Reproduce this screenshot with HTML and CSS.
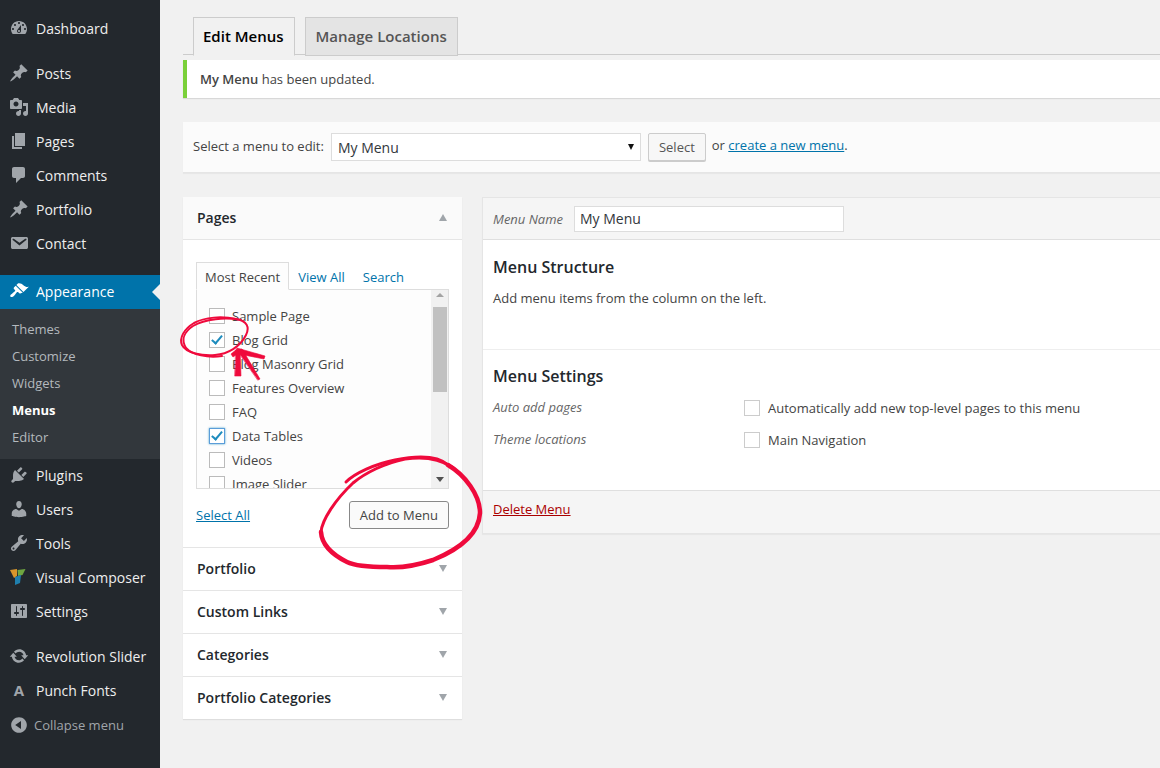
FILE: index.html
```html
<!DOCTYPE html>
<html lang="en">
    <head>
        <title>Edit Menus</title>
        <meta charset="UTF-8">
        <link rel="stylesheet" href="styles.css">
    </head>
    <body>
        <aside class="sidebar">
            <a class="item"><svg class="icon" viewBox="0 0 20 20"><path d="M3.76 16h12.48c1.1-1.37 1.76-3.11 1.76-5 0-4.42-3.58-8-8-8s-8 3.58-8 8c0 1.89.66 3.63 1.76 5zM10 4c.55 0 1 .45 1 1s-.45 1-1 1-1-.45-1-1 .45-1 1-1zM6 6c.55 0 1 .45 1 1s-.45 1-1 1-1-.45-1-1 .45-1 1-1zm8 0c.55 0 1 .45 1 1s-.45 1-1 1-1-.45-1-1 .45-1 1-1zm-5.37 5.55L12 7v6c0 1.1-.9 2-2 2s-2-.9-2-2c0-.57.24-1.08.63-1.45zM4 10c.55 0 1 .45 1 1s-.45 1-1 1-1-.45-1-1 .45-1 1-1zm12 0c.55 0 1 .45 1 1s-.45 1-1 1-1-.45-1-1 .45-1 1-1zm-5 3c0-.55-.45-1-1-1s-1 .45-1 1 .45 1 1 1 1-.45 1-1z"/></svg>Dashboard</a>

            <div class="group">
                <a class="item"><svg class="icon" viewBox="0 0 20 20"><path d="M10.44 3.02l1.82-1.82 6.36 6.35-1.83 1.82c-1.05-.68-2.48-.57-3.41.36l-.75.75c-.92.93-1.04 2.35-.35 3.41l-1.83 1.82-2.41-2.41-2.8 2.79c-.42.42-3.38 2.71-3.8 2.29s1.86-3.39 2.28-3.81l2.79-2.79L4.1 9.36l1.83-1.82c1.05.69 2.48.57 3.4-.36l.75-.75c.93-.92 1.05-2.35.36-3.41z"/></svg>Posts</a>
                <a class="item"><svg class="icon" viewBox="0 0 20 20"><path d="M13 11V4c0-.55-.45-1-1-1h-1.67L9 1H5L3.67 3H2c-.55 0-1 .45-1 1v7c0 .55.45 1 1 1h10c.55 0 1-.45 1-1zM7 4.5c1.38 0 2.5 1.12 2.5 2.5S8.38 9.5 7 9.5 4.5 8.38 4.5 7 5.62 4.5 7 4.5zM14 6h5v10.5c0 1.38-1.12 2.5-2.5 2.5S14 17.88 14 16.5s1.12-2.5 2.5-2.5c.17 0 .34.02.5.05V9h-3V6zm-4 8.05V13h2v3.5c0 1.38-1.12 2.5-2.5 2.5S7 17.88 7 16.5 8.12 14 9.5 14c.17 0 .34.02.5.05z"/></svg>Media</a>
                <a class="item"><svg class="icon" viewBox="0 0 20 20"><path d="M6 15V2h10v13H6zm-1 1h8v2H3V5h2v11z"/></svg>Pages</a>
                <a class="item"><svg class="icon" viewBox="0 0 20 20"><path d="M5 2h9c1.1 0 2 .9 2 2v7c0 1.1-.9 2-2 2h-2l-5 5v-5H5c-1.1 0-2-.9-2-2V4c0-1.1.9-2 2-2z"/></svg>Comments</a>
                <a class="item"><svg class="icon" viewBox="0 0 20 20"><path d="M10.44 3.02l1.82-1.82 6.36 6.35-1.83 1.82c-1.05-.68-2.48-.57-3.41.36l-.75.75c-.92.93-1.04 2.35-.35 3.41l-1.83 1.82-2.41-2.41-2.8 2.79c-.42.42-3.38 2.71-3.8 2.29s1.86-3.39 2.28-3.81l2.79-2.79L4.1 9.36l1.83-1.82c1.05.69 2.48.57 3.4-.36l.75-.75c.93-.92 1.05-2.35.36-3.41z"/></svg>Portfolio</a>
                <a class="item"><svg class="icon" viewBox="0 0 20 20"><path d="M3.87 4h13.25C18.37 4 19 4.59 19 5.79v8.42c0 1.19-.63 1.79-1.88 1.79H3.87c-1.25 0-1.88-.6-1.88-1.79V5.79c0-1.2.63-1.79 1.88-1.79zm6.62 8.6l6.74-5.53c.24-.2.43-.66.13-1.07-.29-.41-.82-.42-1.17-.17l-5.7 3.86L4.8 5.83c-.35-.25-.88-.24-1.17.17-.3.41-.11.87.13 1.07z"/></svg>Contact</a>
            </div>

            <div class="group group-wide">
                <a class="item current"><svg class="icon" viewBox="0 0 20 20"><path d="M14.48 11.06L7.41 3.99l1.5-1.5c.5-.56 2.3-.47 3.51.32 1.21.8 1.43 1.28 2.91 2.1 1.18.64 2.45 1.26 4.45.85zm-.71.71L6.7 4.7 4.93 6.47c-.39.39-.39 1.02 0 1.41l1.06 1.06c.39.39.39 1.03 0 1.42-.6.6-1.43 1.11-2.21 1.69-.35.26-.7.53-1.01.84C1.43 13.23.76 14.89 1.55 15.69s2.45.13 3.79-1.21c.31-.31.58-.66.84-1.01.58-.78 1.09-1.61 1.69-2.21.39-.39 1.02-.39 1.41 0l1.06 1.06c.39.39 1.02.39 1.41 0z"/></svg>Appearance</a>
                <ul class="submenu">
                    <li>Themes</li>
                    <li>Customize</li>
                    <li>Widgets</li>
                    <li class="active">Menus</li>
                    <li>Editor</li>
                </ul>
                <a class="item"><svg class="icon" viewBox="0 0 20 20"><path d="M13.11 4.36L9.87 7.6 8 5.73l3.24-3.24c.35-.34 1.05-.2 1.56.32.52.51.66 1.21.31 1.55zm-8 1.77l.91-1.12 9.01 9.01-1.19.84c-.71.71-2.63 1.16-3.82 1.16H6.14L4.9 17.26c-.59.59-1.54.59-2.12 0-.59-.58-.59-1.53 0-2.12l1.24-1.24v-3.88c0-1.13.4-3.19 1.09-3.89zm7.26 3.97l3.24-3.24c.34-.35 1.04-.21 1.55.31.52.51.66 1.21.31 1.55l-3.24 3.25z"/></svg>Plugins</a>
                <a class="item"><svg class="icon" viewBox="0 0 20 20"><path d="M10 9.25c-2.27 0-2.73-3.44-2.73-3.44C7 4.02 7.82 2 9.97 2c2.16 0 2.98 2.02 2.71 3.81 0 0-.41 3.44-2.68 3.44zm0 2.57L12.72 10c2.39 0 4.52 2.33 4.52 4.53v2.49s-3.65 1.13-7.24 1.13c-3.65 0-7.24-1.13-7.24-1.13v-2.49c0-2.25 1.94-4.48 4.47-4.48z"/></svg>Users</a>
                <a class="item"><svg class="icon" viewBox="0 0 20 20"><path d="M16.68 9.77c-1.34 1.34-3.3 1.67-4.95.99l-5.41 6.52c-.99.99-2.59.99-3.58 0s-.99-2.59 0-3.57l6.52-5.42c-.68-1.65-.35-3.61.99-4.95 1.28-1.28 3.12-1.62 4.72-1.06l-2.89 2.89 2.82 2.82 2.86-2.87c.53 1.58.18 3.39-1.08 4.65zM3.81 16.21c.4.39 1.04.39 1.43 0 .4-.4.4-1.04 0-1.43-.39-.4-1.03-.4-1.43 0-.39.39-.39 1.03 0 1.43z"/></svg>Tools</a>
                <a class="item"><svg class="icon" viewBox="0 0 20 20"><path fill="#d8962c" d="M1 3l7-1 0 7-3 2z"/><path fill="#6fa640" d="M8.500 3l8-1-3 6-4.500 1z"/><path fill="#1f7fae" d="M6 10l6-2-1 8-5 2z"/></svg>Visual Composer</a>
                <a class="item"><svg class="icon" viewBox="0 0 20 20"><path d="M18 16V4c0-.55-.45-1-1-1H3c-.55 0-1 .45-1 1v12c0 .55.45 1 1 1h14c.55 0 1-.45 1-1zM8 11h1c.55 0 1 .45 1 1s-.45 1-1 1H8v1.5c0 .28-.22.5-.5.5s-.5-.22-.5-.5V13H6c-.55 0-1-.45-1-1s.45-1 1-1h1V5.5c0-.28.22-.5.5-.5s.5.22.5.5V11zm5-2h-1c-.55 0-1-.45-1-1s.45-1 1-1h1V5.5c0-.28.22-.5.5-.5s.5.22.5.5V7h1c.55 0 1 .45 1 1s-.45 1-1 1h-1v5.5c0 .28-.22.5-.5.5s-.5-.22-.5-.5V9z"/></svg>Settings</a>
            </div>

            <div class="group">
                <a class="item"><svg class="icon" viewBox="0 0 20 20"><path d="M10.2 3.28c3.53 0 6.43 2.61 6.92 6h2.08l-3.5 4-3.5-4h2.32c-.45-1.97-2.21-3.45-4.32-3.45-1.45 0-2.73.71-3.54 1.78L4.95 5.66C6.23 4.2 8.11 3.28 10.2 3.28zm-.4 13.44c-3.52 0-6.43-2.61-6.92-6H.8l3.5-4c1.17 1.33 2.33 2.67 3.5 4H5.48c.45 1.97 2.21 3.45 4.32 3.45 1.45 0 2.73-.71 3.54-1.78l1.71 1.95c-1.28 1.46-3.15 2.38-5.25 2.38z"/></svg>Revolution Slider</a>
                <a class="item"><span class="icon letter">A</span>Punch Fonts</a>
            </div>
            <a class="collapse"><svg class="icon" viewBox="0 0 20 20"><path d="M10 2.16c4.33 0 7.84 3.51 7.84 7.84s-3.51 7.84-7.84 7.84S2.16 14.33 2.16 10 5.71 2.16 10 2.16zm2 11.72V6.12L6.18 9.97z"/></svg>Collapse menu</a>
        </aside>

        <main class="content">
            <nav class="tabs">
                <a class="tab tab-active">Edit Menus</a>
                <a class="tab">Manage Locations</a>
            </nav>

            <div class="notice"><strong>My Menu</strong> has been updated.</div>

            <div class="manage">
                <span class="manage-label">Select a menu to edit:</span>
                <div class="select">My Menu<span class="select-arrow"></span></div>
                <a class="btn">Select</a>
                <span class="manage-or">or <a class="link">create a new menu</a>.</span>
            </div>

            <div class="columns">
                <section class="accordion">
                    <h3 class="acc-head acc-open">Pages<span class="tri tri-up"></span></h3>
                    <div class="acc-body">
                        <div class="pane-tabs">
                            <span class="pane-tab">Most Recent</span>
                            <a class="pane-link">View All</a>
                            <a class="pane-link">Search</a>
                        </div>
                        <div class="pane">
                            <ul class="checklist">
                                <li><span class="check"></span>Sample Page</li>
                                <li><span class="check checked"></span>Blog Grid</li>
                                <li><span class="check"></span>Blog Masonry Grid</li>
                                <li><span class="check"></span>Features Overview</li>
                                <li><span class="check"></span>FAQ</li>
                                <li><span class="check checked focus"></span>Data Tables</li>
                                <li><span class="check"></span>Videos</li>
                                <li><span class="check"></span>Image Slider</li>
                            </ul>
                            <div class="scrollbar">
                                <span class="tri tri-sb-up"></span>
                                <span class="thumb"></span>
                                <span class="tri tri-sb-down"></span>
                            </div>
                        </div>
                        <div class="acc-actions">
                            <a class="link">Select All</a>
                            <a class="btn btn-add">Add to Menu</a>
                        </div>
                    </div>
                    <h3 class="acc-head">Portfolio<span class="tri tri-down"></span></h3>
                    <h3 class="acc-head">Custom Links<span class="tri tri-down"></span></h3>
                    <h3 class="acc-head">Categories<span class="tri tri-down"></span></h3>
                    <h3 class="acc-head">Portfolio Categories<span class="tri tri-down"></span></h3>
                </section>

                <section class="editor">
                    <div class="editor-head">
                        <label class="em-label">Menu Name</label>
                        <div class="name-input">My Menu</div>
                    </div>
                    <div class="editor-body">
                        <h3 class="editor-title">Menu Structure</h3>
                        <p class="editor-text">Add menu items from the column on the left.</p>
                        <div class="settings">
                            <h3 class="editor-title">Menu Settings</h3>
                            <div class="setting-row">
                                <span class="em-label setting-label">Auto add pages</span>
                                <span class="check"></span>
                                <span>Automatically add new top-level pages to this menu</span>
                            </div>
                            <div class="setting-row">
                                <span class="em-label setting-label">Theme locations</span>
                                <span class="check"></span>
                                <span>Main Navigation</span>
                            </div>
                        </div>
                    </div>
                    <div class="editor-foot"><a class="delete">Delete Menu</a></div>
                </section>
            </div>
        </main>

        <!-- hand drawn marks on top of the screenshot -->
        <svg class="scribble" viewBox="0 0 1160 768">
            <path class="thin" d="M246 335C250 327 247 321 236 319C222 316 205 317 194 323C184 329 179 338 182 345C186 353 202 356 215 355C228 354 240 347 246 335"/>
            <path class="thin" d="M241 320C225 317 205 319 193 326C184 332 181 340 186 348C192 355 208 358 222 356"/>
            <path class="solid" d="M236 350L240 350L241 376L235 376Z"/>
            <path class="solid" d="M237 348L265 356L264 359L239 354Z"/>
            <path class="solid" d="M237 350L242 349L260 379L258 380Z"/>
            <path class="solid" d="M237 349L231 354L233 357L239 353Z"/>
            <path class="mark" d="M346 482C355 473 375 464 395 460C415 456 437 455 448 465"/>
            <path class="thick" d="M448 465C465 475 480 495 480 513C479 530 465 547 433 560C415 566 400 568 387 567C370 567 355 566 347 562C335 556 322 547 321 532"/>
            <path class="mark" d="M321 532C322 520 335 500 353 483C365 473 385 463 405 459C425 456 440 459 452 467"/>
        </svg>
    </body>
</html>
```

FILE: styles.css
```css
html, body {
    height: 100%;
}
body {
    margin: 0;
    display: flex;
    position: relative;
    overflow: hidden;
    background-color: #f1f1f1;
    color: #444;
    font-family: "Open Sans", sans-serif;
    font-size: 13px;
}
ul {
    margin: 0;
    padding: 0;
    list-style: none;
}
h3 {
    margin: 0;
}

/* sidebar */
.sidebar {
    flex: 0 0 160px;
    padding-top: 11px;
    background-color: #23282d;
    color: #eee;
    font-size: 14px;
}
.item {
    display: flex;
    align-items: center;
    height: 34px;
    position: relative;
}
.group {
    margin-top: 11px;
}
.group-wide {
    margin-top: 15px;
}
.icon {
    flex: 0 0 20px;
    width: 20px;
    height: 20px;
    margin: 0 7px 0 9px;
    fill: #a0a5aa;
}
.letter {
    color: #a0a5aa;
    font-weight: 700;
    font-size: 15px;
    text-align: center;
    line-height: 20px;
}
.current {
    box-sizing: border-box;
    padding-bottom: 2px;
    background-color: #0073aa;
    color: #fff;
}
.current .icon {
    fill: #fff;
}
.current::after {
    content: "";
    position: absolute;
    right: 0;
    top: 9px;
    border: 8px solid transparent;
    border-right-color: #f1f1f1;
    border-left-width: 0;
}
.submenu {
    margin-bottom: -1px;
    padding: 7px 0 8px;
    background-color: #32373c;
    color: #b4b9be;
    font-size: 13px;
}
.submenu li {
    height: 27px;
    line-height: 27px;
    padding-left: 12px;
}
.submenu .active {
    color: #fff;
    font-weight: 700;
}
.collapse {
    display: flex;
    align-items: center;
    height: 34px;
    margin-top: 1px;
    color: #a0a5aa;
    font-size: 13px;
}
.collapse .icon {
    margin-right: 5px;
}

/* main area */
.content {
    flex: 1;
    min-width: 0;
    padding: 17px 0 0 23px;
}
.tabs {
    display: flex;
    gap: 10px;
    height: 37px;
    padding-left: 10px;
    border-bottom: 1px solid #ccc;
}
.tab {
    height: 37px;
    padding: 0 10px;
    border: 1px solid #ccc;
    background-color: #e4e4e4;
    color: #555;
    font-size: 15px;
    font-weight: 600;
    line-height: 37px;
}
.tab-active {
    padding-left: 9px;
    border-bottom-color: #f1f1f1;
    background-color: #f1f1f1;
    color: #000;
}
.notice {
    height: 38px;
    margin-top: 5px;
    padding-left: 13px;
    border-left: 4px solid #7ad03a;
    background-color: #fff;
    box-shadow: 0 1px 1px rgba(0, 0, 0, .1);
    line-height: 38px;
}
.notice strong {
    font-weight: 600;
}
.manage {
    display: flex;
    align-items: center;
    gap: 7px;
    height: 50px;
    margin-top: 24px;
    padding-left: 10px;
    background-color: #fbfbfb;
    border-bottom: 1px solid #e5e5e5;
    box-shadow: 0 1px 1px rgba(0, 0, 0, .04);
}
.manage-label {
    margin-bottom: 2px;
}
.manage-or {
    margin: 0 0 4px -1px;
}
.select {
    position: relative;
    width: 310px;
    height: 28px;
    padding-left: 6px;
    box-sizing: border-box;
    border: 1px solid #ddd;
    background-color: #fff;
    color: #32373c;
    font-size: 14px;
    line-height: 28px;
}
.select-arrow {
    position: absolute;
    right: 6px;
    top: 10px;
    border: 3.5px solid transparent;
    border-top: 6px solid #111;
    border-bottom: 0;
}
.btn {
    height: 26px;
    padding: 0 10px;
    border: 1px solid #ccc;
    border-radius: 2px;
    background-color: #f7f7f7;
    box-shadow: 0 1px 0 #ccc;
    color: #555;
    font-size: 13px;
    line-height: 26px;
}
.link {
    color: #0073aa;
    text-decoration: underline;
}
.columns {
    display: flex;
    align-items: flex-start;
    gap: 20px;
    margin-top: 24px;
}
.accordion {
    flex: 0 0 279px;
    background-color: #fff;
    box-shadow: 0 1px 1px rgba(0, 0, 0, .08);
}
.acc-head {
    display: flex;
    justify-content: space-between;
    align-items: center;
    height: 41px;
    padding: 0 15px 1px 14px;
    border-top: 1px solid #e5e5e5;
    color: #23282d;
    font-size: 14px;
    font-weight: 600;
}
.acc-open {
    background-color: #fafafa;
    border: 0;
    border-bottom: 1px solid #e5e5e5;
}
.tri {
    border: 4px solid transparent;
    width: 0;
    height: 0;
}
.tri-up {
    border-top: 0;
    border-bottom: 7px solid #a0a5aa;
}
.tri-down {
    border-bottom: 0;
    border-top: 7px solid #a0a5aa;
}
.acc-body {
    padding: 23px 13px 18px;
}
.pane-tabs {
    display: flex;
    align-items: flex-end;
    height: 26px;
    gap: 18px;
}
.pane-tab {
    height: 26px;
    padding: 0 8px;
    margin-bottom: -1px;
    z-index: 1;
    background-color: #fdfdfd;
    border: 1px solid #ddd;
    border-bottom-color: #fdfdfd;
    line-height: 28px;
}
.pane-tab + .pane-link {
    margin-left: -9px;
}
.pane-link {
    margin-bottom: -2px;
    color: #0073aa;
    line-height: 28px;
}
.pane {
    display: flex;
    height: 200px;
    overflow: hidden;
    background-color: #fdfdfd;
    border: 1px solid #ddd;
    box-sizing: border-box;
}
.checklist {
    flex: 1;
    padding: 14px 0 0 12px;
}
.checklist li {
    display: flex;
    align-items: center;
    height: 24px;
    gap: 7px;
}
.check {
    flex: 0 0 14px;
    position: relative;
    width: 14px;
    height: 14px;
    border: 1px solid #bbb;
    background-color: #fff;
}
.checked::after {
    content: "";
    position: absolute;
    left: 4px;
    top: 0;
    width: 4px;
    height: 9px;
    border: solid #1e8cbe;
    border-width: 0 2.5px 2.5px 0;
    transform: rotate(40deg);
}
.focus {
    border-color: #5b9dd9;
    box-shadow: 0 0 2px rgba(30, 140, 190, .8);
}
.scrollbar {
    flex: 0 0 17px;
    display: flex;
    flex-direction: column;
    align-items: center;
    background-color: #f1f1f1;
}
.thumb {
    width: 14px;
    height: 85px;
    margin-top: 10px;
    background-color: #c1c1c1;
}
.tri-sb-up {
    margin-top: 3px;
    border-top: 0;
    border-bottom: 4px solid #a3a3a3;
}
.tri-sb-down {
    margin-top: 85px;
    border-bottom: 0;
    border-top: 5px solid #505050;
}
.acc-actions {
    display: flex;
    justify-content: space-between;
    align-items: center;
    height: 28px;
    margin-top: 12px;
}
.btn-add {
    border-color: #888;
    border-radius: 3px;
    background-color: #fafafa;
    color: #444;
    box-shadow: none;
}

/* menu editor */
.editor {
    flex: 1;
    border: 1px solid #e5e5e5;
    border-right: 0;
    background-color: #fff;
    box-shadow: 0 1px 1px rgba(0, 0, 0, .04);
}
.editor-head {
    display: flex;
    align-items: center;
    gap: 11px;
    height: 40px;
    padding: 1px 0 0 10px;
    background-color: #f5f5f5;
    border-bottom: 1px solid #dfdfdf;
}
.em-label {
    color: #666;
    font-style: italic;
    font-size: 13px;
}
.name-input {
    width: 263px;
    height: 24px;
    padding-left: 5px;
    border: 1px solid #ddd;
    background-color: #fff;
    color: #32373c;
    font-size: 14px;
    line-height: 24px;
}
.editor-body {
    height: 250px;
    padding: 16px 0 0 10px;
    box-sizing: border-box;
}
.editor-title {
    color: #23282d;
    font-size: 16px;
    font-weight: 600;
    line-height: 22px;
}
.editor-text {
    margin: 11px 0 0;
    line-height: 18px;
}
.settings {
    margin: 42px 0 0 -10px;
    padding: 15px 0 0 10px;
    border-top: 1px solid #eee;
}
.setting-row {
    display: flex;
    align-items: center;
    gap: 8px;
    height: 32px;
}
.settings .editor-title {
    margin-bottom: 5px;
}
.setting-row .check {
    border-color: #ccc;
}
.setting-label {
    flex: 0 0 243px;
    margin-bottom: 2px;
}
.editor-foot {
    height: 42px;
    padding-left: 10px;
    background-color: #f5f5f5;
    border-top: 1px solid #dfdfdf;
    line-height: 36px;
}
.delete {
    color: #a00;
    text-decoration: underline;
}

/* red marker on top */
.scribble {
    position: absolute;
    left: 0;
    top: 0;
    width: 1160px;
    height: 768px;
    pointer-events: none;
}
.scribble path {
    fill: none;
    stroke: #ef0a3c;
    stroke-linecap: round;
    stroke-linejoin: round;
}
.scribble .solid {
    fill: #ef0a3c;
    stroke-width: .6;
}
.thin {
    stroke-width: 2;
}
.mark {
    stroke-width: 3;
}
.thick {
    stroke-width: 4.5;
}
```
